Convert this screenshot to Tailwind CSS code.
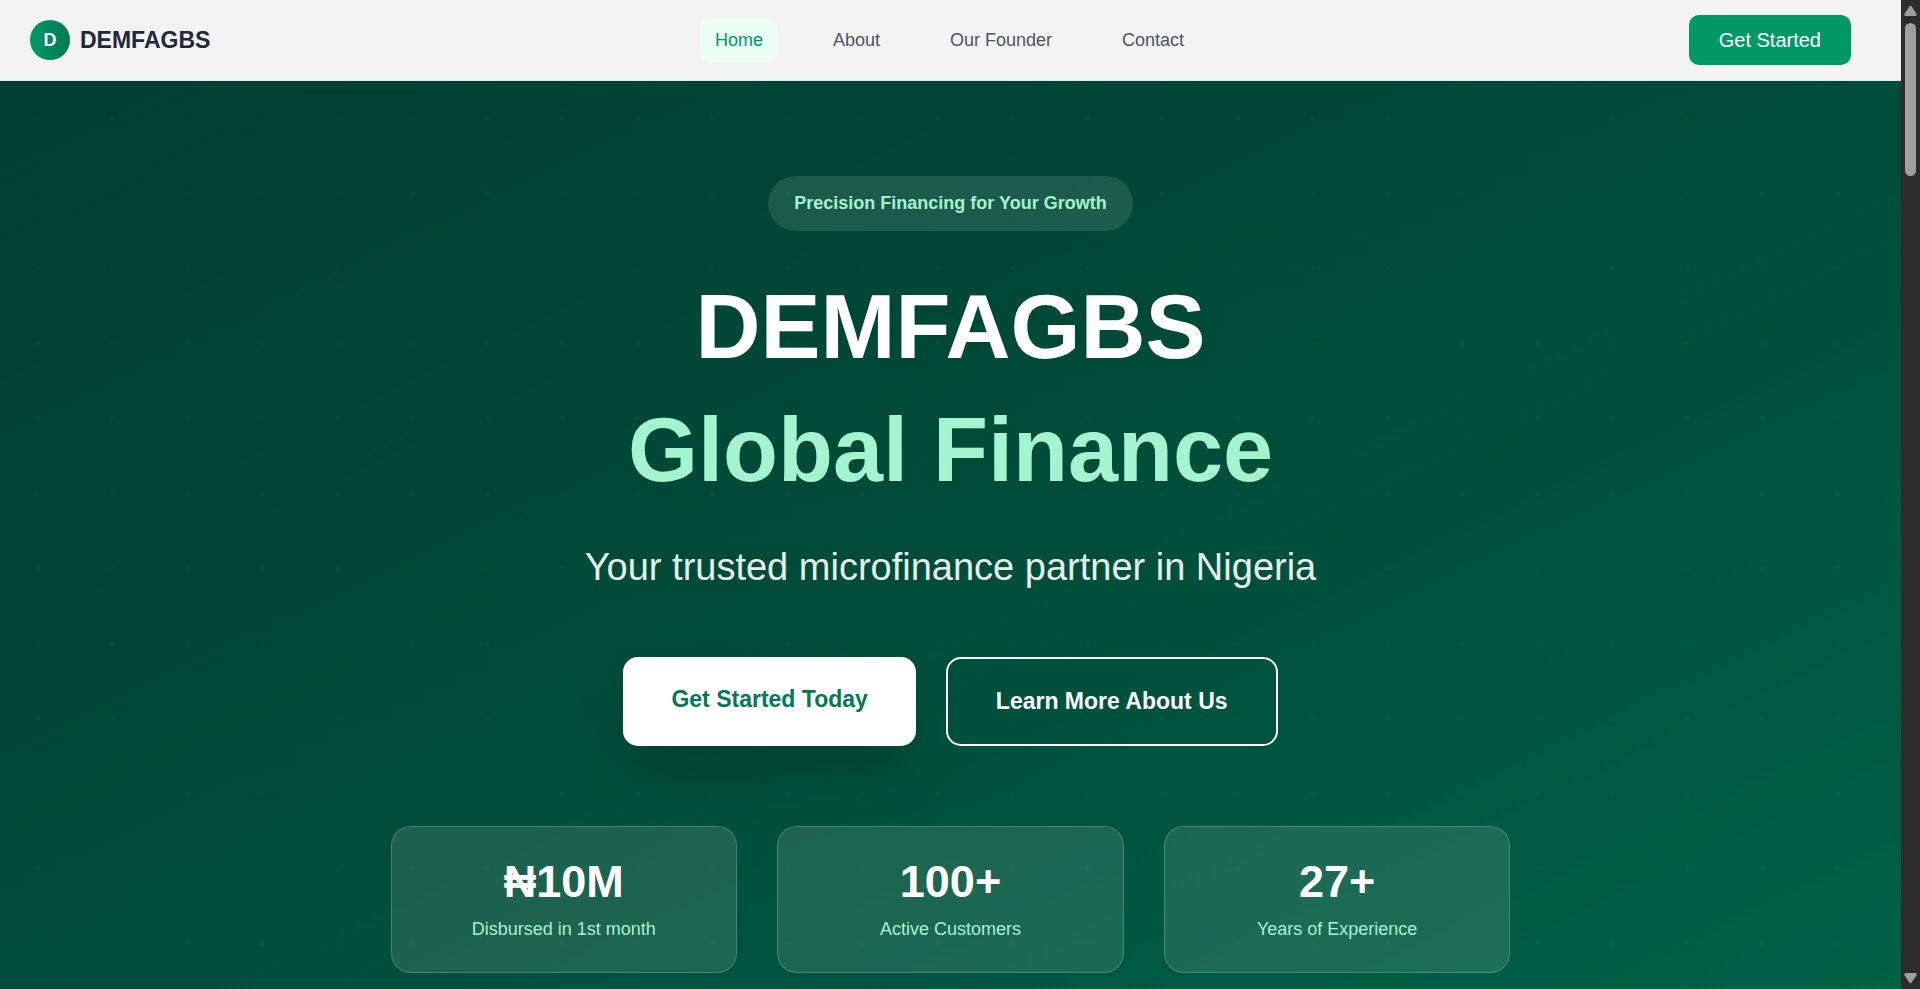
<!DOCTYPE html>
<html lang="en">

<head>
    <meta charset="UTF-8">
    <meta name="viewport" content="width=device-width, initial-scale=1.0">
    <title>DEMFAGBS Global Finance</title>
    <script src="https://cdn.jsdelivr.net/npm/@tailwindcss/browser@4"></script>
</head>

<body class="flex h-screen overflow-hidden font-['Liberation_Sans',Arial,sans-serif]">
    <div class="flex min-w-0 flex-1 flex-col">
        <!-- Header -->
        <header class="relative z-10 flex shrink-0 items-center justify-between border-b border-[#e3ebe8] bg-[#f3f3f3] py-[15px] pr-[50px] pl-[30px]">
            <a href="#" class="flex items-center gap-[10px]">
                <span class="flex size-10 items-center justify-center rounded-full bg-linear-to-r from-[#009966] to-[#007a55] text-lg font-bold text-white">D</span>
                <span class="text-[23px] leading-8 font-bold text-[#1e2939]">DEMFAGBS</span>
            </a>
            <nav class="flex items-center gap-10 text-[18px] leading-[25px] text-[#4a5565]">
                <a href="#" class="rounded-[10px] bg-[#ecfdf5] px-[15px] py-[10px] text-[#009966]">Home</a>
                <a href="#about" class="rounded-[10px] px-[15px] py-[10px]">About</a>
                <a href="#founder" class="rounded-[10px] px-[15px] py-[10px]">Our Founder</a>
                <a href="#contact" class="rounded-[10px] px-[15px] py-[10px]">Contact</a>
            </nav>
            <button class="rounded-[10px] bg-[#009966] px-[30px] py-[10px] text-xl leading-[30px] text-white">Get Started</button>
        </header>

        <!-- Hero -->
        <main class="relative flex-1 bg-linear-to-br from-[#003e2f] via-[#004c38] to-[#006145]">
            <div class="absolute inset-0 bg-[radial-gradient(circle,rgba(255,255,255,0.015)_2px,transparent_3px)] bg-size-[75px_75px]"></div>
            <section class="relative flex flex-col items-center px-8 pt-[95px] text-center">
                <div class="rounded-full bg-white/11 px-[26px] py-[15px] text-[18px] leading-[25px] font-bold text-[#a4f4cf]">Precision Financing for Your Growth</div>
                <h1 class="mt-10 text-[90px] leading-[113px] font-bold text-white">
                    DEMFAGBS
                    <span class="mt-[10px] block text-[#a4f4cf]">Global Finance</span>
                </h1>
                <p class="mt-[30px] text-[38px] leading-[60px] text-[#e5eeea]">Your trusted microfinance partner in Nigeria</p>
                <div class="mt-[60px] flex gap-[30px] text-[23px] leading-[35px] font-bold">
                    <a href="#" class="rounded-[15px] bg-white px-12 py-[25px] text-[#007a55] shadow-[0_30px_60px_-15px_rgba(0,0,0,0.25)]">Get Started Today</a>
                    <a href="#about" class="rounded-[15px] border-2 border-white px-12 py-[25px] text-white">Learn More About Us</a>
                </div>
                <div class="mt-20 grid w-full max-w-[1120px] grid-cols-3 gap-10">
                    <div class="rounded-[20px] border border-white/20 bg-white/11 p-[30px]">
                        <div class="text-[45px] leading-[50px] font-bold text-white">₦10M</div>
                        <div class="mt-[10px] text-[18px] leading-[25px] text-[#a4f4cf]">Disbursed in 1st month</div>
                    </div>
                    <div class="rounded-[20px] border border-white/20 bg-white/11 p-[30px]">
                        <div class="text-[45px] leading-[50px] font-bold text-white">100+</div>
                        <div class="mt-[10px] text-[18px] leading-[25px] text-[#a4f4cf]">Active Customers</div>
                    </div>
                    <div class="rounded-[20px] border border-white/20 bg-white/11 p-[30px]">
                        <div class="text-[45px] leading-[50px] font-bold text-white">27+</div>
                        <div class="mt-[10px] text-[18px] leading-[25px] text-[#a4f4cf]">Years of Experience</div>
                    </div>
                </div>
            </section>
        </main>
    </div>

    <!-- Scrollbar -->
    <aside class="flex w-[19px] shrink-0 flex-col items-center bg-[#2c2c2c] py-[5px]">
        <svg class="h-[11px] w-[13px]" viewBox="0 0 13 11" fill="#9f9f9f">
            <path d="M5.3 1.6Q6.5 0 7.7 1.6L12.6 9Q13 11 11.5 11H1.5Q0 11 .4 9Z" />
        </svg>
        <div class="mt-[7px] h-[153px] w-[11px] rounded-full bg-[#9f9f9f]"></div>
        <svg class="mt-auto h-[11px] w-[13px]" viewBox="0 0 13 11" fill="#9f9f9f">
            <path d="M5.3 9.4Q6.5 11 7.7 9.4L12.6 2Q13 0 11.5 0H1.5Q0 0 .4 2Z" />
        </svg>
    </aside>
</body>

</html>
